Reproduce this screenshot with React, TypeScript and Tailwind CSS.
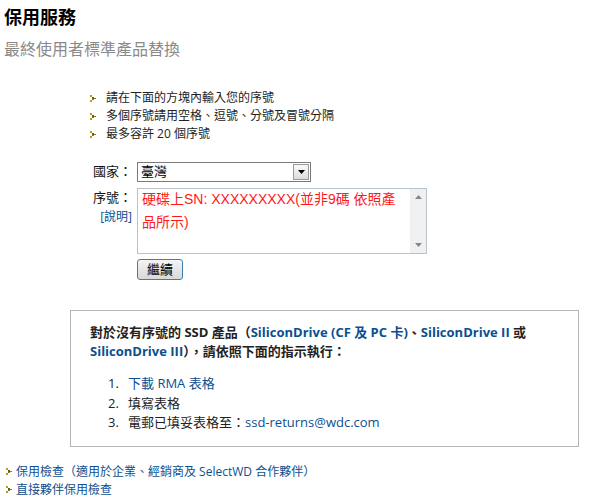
import React from 'react';

const cjk = "font-['Open_Sans','Noto_Sans_CJK_TC',sans-serif]";

function Arrow() {
  return (
    <svg width="6" height="7" viewBox="0 0 6 7" className="shrink-0">
      <rect x="0" y="0" width="2" height="2" fill="#b59a2a" />
      <rect x="2" y="2" width="2" height="2" fill="#6b5a10" />
      <rect x="4" y="3" width="2" height="1" fill="#8a7a20" />
      <rect x="0" y="5" width="2" height="2" fill="#b59a2a" />
      <rect x="2" y="4" width="2" height="1" fill="#8a7a20" />
    </svg>
  );
}

export default function App() {
  return (
    <div className={`w-[600px] h-[499px] bg-white overflow-hidden ${cjk}`}>
      <div className="pl-[4px] pt-[5px]">
        <h1 className="text-[18px] font-bold leading-[24px] text-black">保用服務</h1>
        <h2 className="mt-[9px] text-[16px] leading-[22px] text-[#8a8a8a]">最終使用者標準產品替換</h2>
      </div>

      <ul className="mt-[29px] ml-[90px] text-[12px] leading-[18px] text-[#222]">
        <li className="flex items-center gap-[10px]"><Arrow />請在下面的方塊內輸入您的序號</li>
        <li className="flex items-center gap-[10px]"><Arrow />多個序號請用空格、逗號、分號及冒號分隔</li>
        <li className="flex items-center gap-[10px]"><Arrow />最多容許 20 個序號</li>
      </ul>

      <div className="mt-[19px] flex flex-col gap-[6px] text-[13px]">
        <div className="flex items-center">
          <div className="w-[137px] pr-[5px] text-right text-[#111]">國家：</div>
          <div className="flex h-[20px] w-[174px] items-center border border-[#7a7a7a] bg-white">
            <span className="flex-1 pl-[3px] text-[13px] text-black">臺灣</span>
            <span className="mr-[1px] flex h-[16px] w-[16px] items-center justify-center border border-[#9a9a9a] bg-gradient-to-b from-[#fafafa] to-[#dcdcdc]">
              <svg width="7" height="4" viewBox="0 0 7 4"><path d="M0 0h7L3.5 4z" fill="#000" /></svg>
            </span>
          </div>
        </div>
        <div className="flex">
          <div className="w-[137px] pr-[5px] text-right leading-[19px]">
            <div className="text-[#111]">序號：</div>
            <div className="text-[12px] text-[#0b4f8f]">[說明]</div>
          </div>
          <div className="flex h-[66px] w-[290px] border border-[#b9c3cc] bg-white">
            <div className="flex-1 pl-[4px] pr-[8px] -mt-[1px] text-[14px] leading-[23px] text-[#ff1a1a] font-['Liberation_Sans','Noto_Sans_CJK_TC',sans-serif]">
              硬碟上SN: XXXXXXXXX(並非9碼 依照產品所示)
            </div>
            <div className="flex w-[16px] flex-col items-center justify-between bg-[#f0f0f0] py-[6px]">
              <svg width="7" height="4" viewBox="0 0 7 4"><path d="M3.5 0L7 4H0z" fill="#888" /></svg>
              <svg width="7" height="4" viewBox="0 0 7 4"><path d="M0 0h7L3.5 4z" fill="#888" /></svg>
            </div>
          </div>
        </div>
        <div className="pl-[137px] -mt-[1px]">
          <button className="h-[21px] w-[46px] rounded-[3px] border border-[#3c7fb1] bg-gradient-to-b from-[#f4f4f4] to-[#d8d8d8] text-[13px] leading-[19px] text-black">繼續</button>
        </div>
      </div>

      <div className="mt-[30px] ml-[70px] w-[509px] border border-[#b5b5b5] pl-[19px] pt-[12px] pb-[13px]">
        <p className="text-[13px] font-bold leading-[19px] text-[#222]">
          對於沒有序號的 SSD 產品（<span className="text-[#0b4f8f]">SiliconDrive (CF 及 PC 卡)</span>、<span className="text-[#0b4f8f]">SiliconDrive II</span> 或
          <br />
          <span className="text-[#0b4f8f]">SiliconDrive III</span>），請依照下面的指示執行：
        </p>
        <ol className="mt-[13px] ml-[18px] text-[13px] leading-[19.5px] text-[#222]">
          <li className="flex"><span className="w-[20px]">1.</span><span className="text-[#0b4f8f]">下載 RMA 表格</span></li>
          <li className="flex"><span className="w-[20px]">2.</span><span>填寫表格</span></li>
          <li className="flex"><span className="w-[20px]">3.</span><span>電郵已填妥表格至：<span className="text-[#0b4f8f]">ssd-returns@wdc.com</span></span></li>
        </ol>
      </div>

      <ul className="mt-[16px] ml-[6px] text-[12px] leading-[18px] text-[#0b4f8f]">
        <li className="flex items-center gap-[4px]"><Arrow />保用檢查（適用於企業、經銷商及 SelectWD 合作夥伴）</li>
        <li className="flex items-center gap-[4px]"><Arrow />直接夥伴保用檢查</li>
      </ul>
    </div>
  );
}
